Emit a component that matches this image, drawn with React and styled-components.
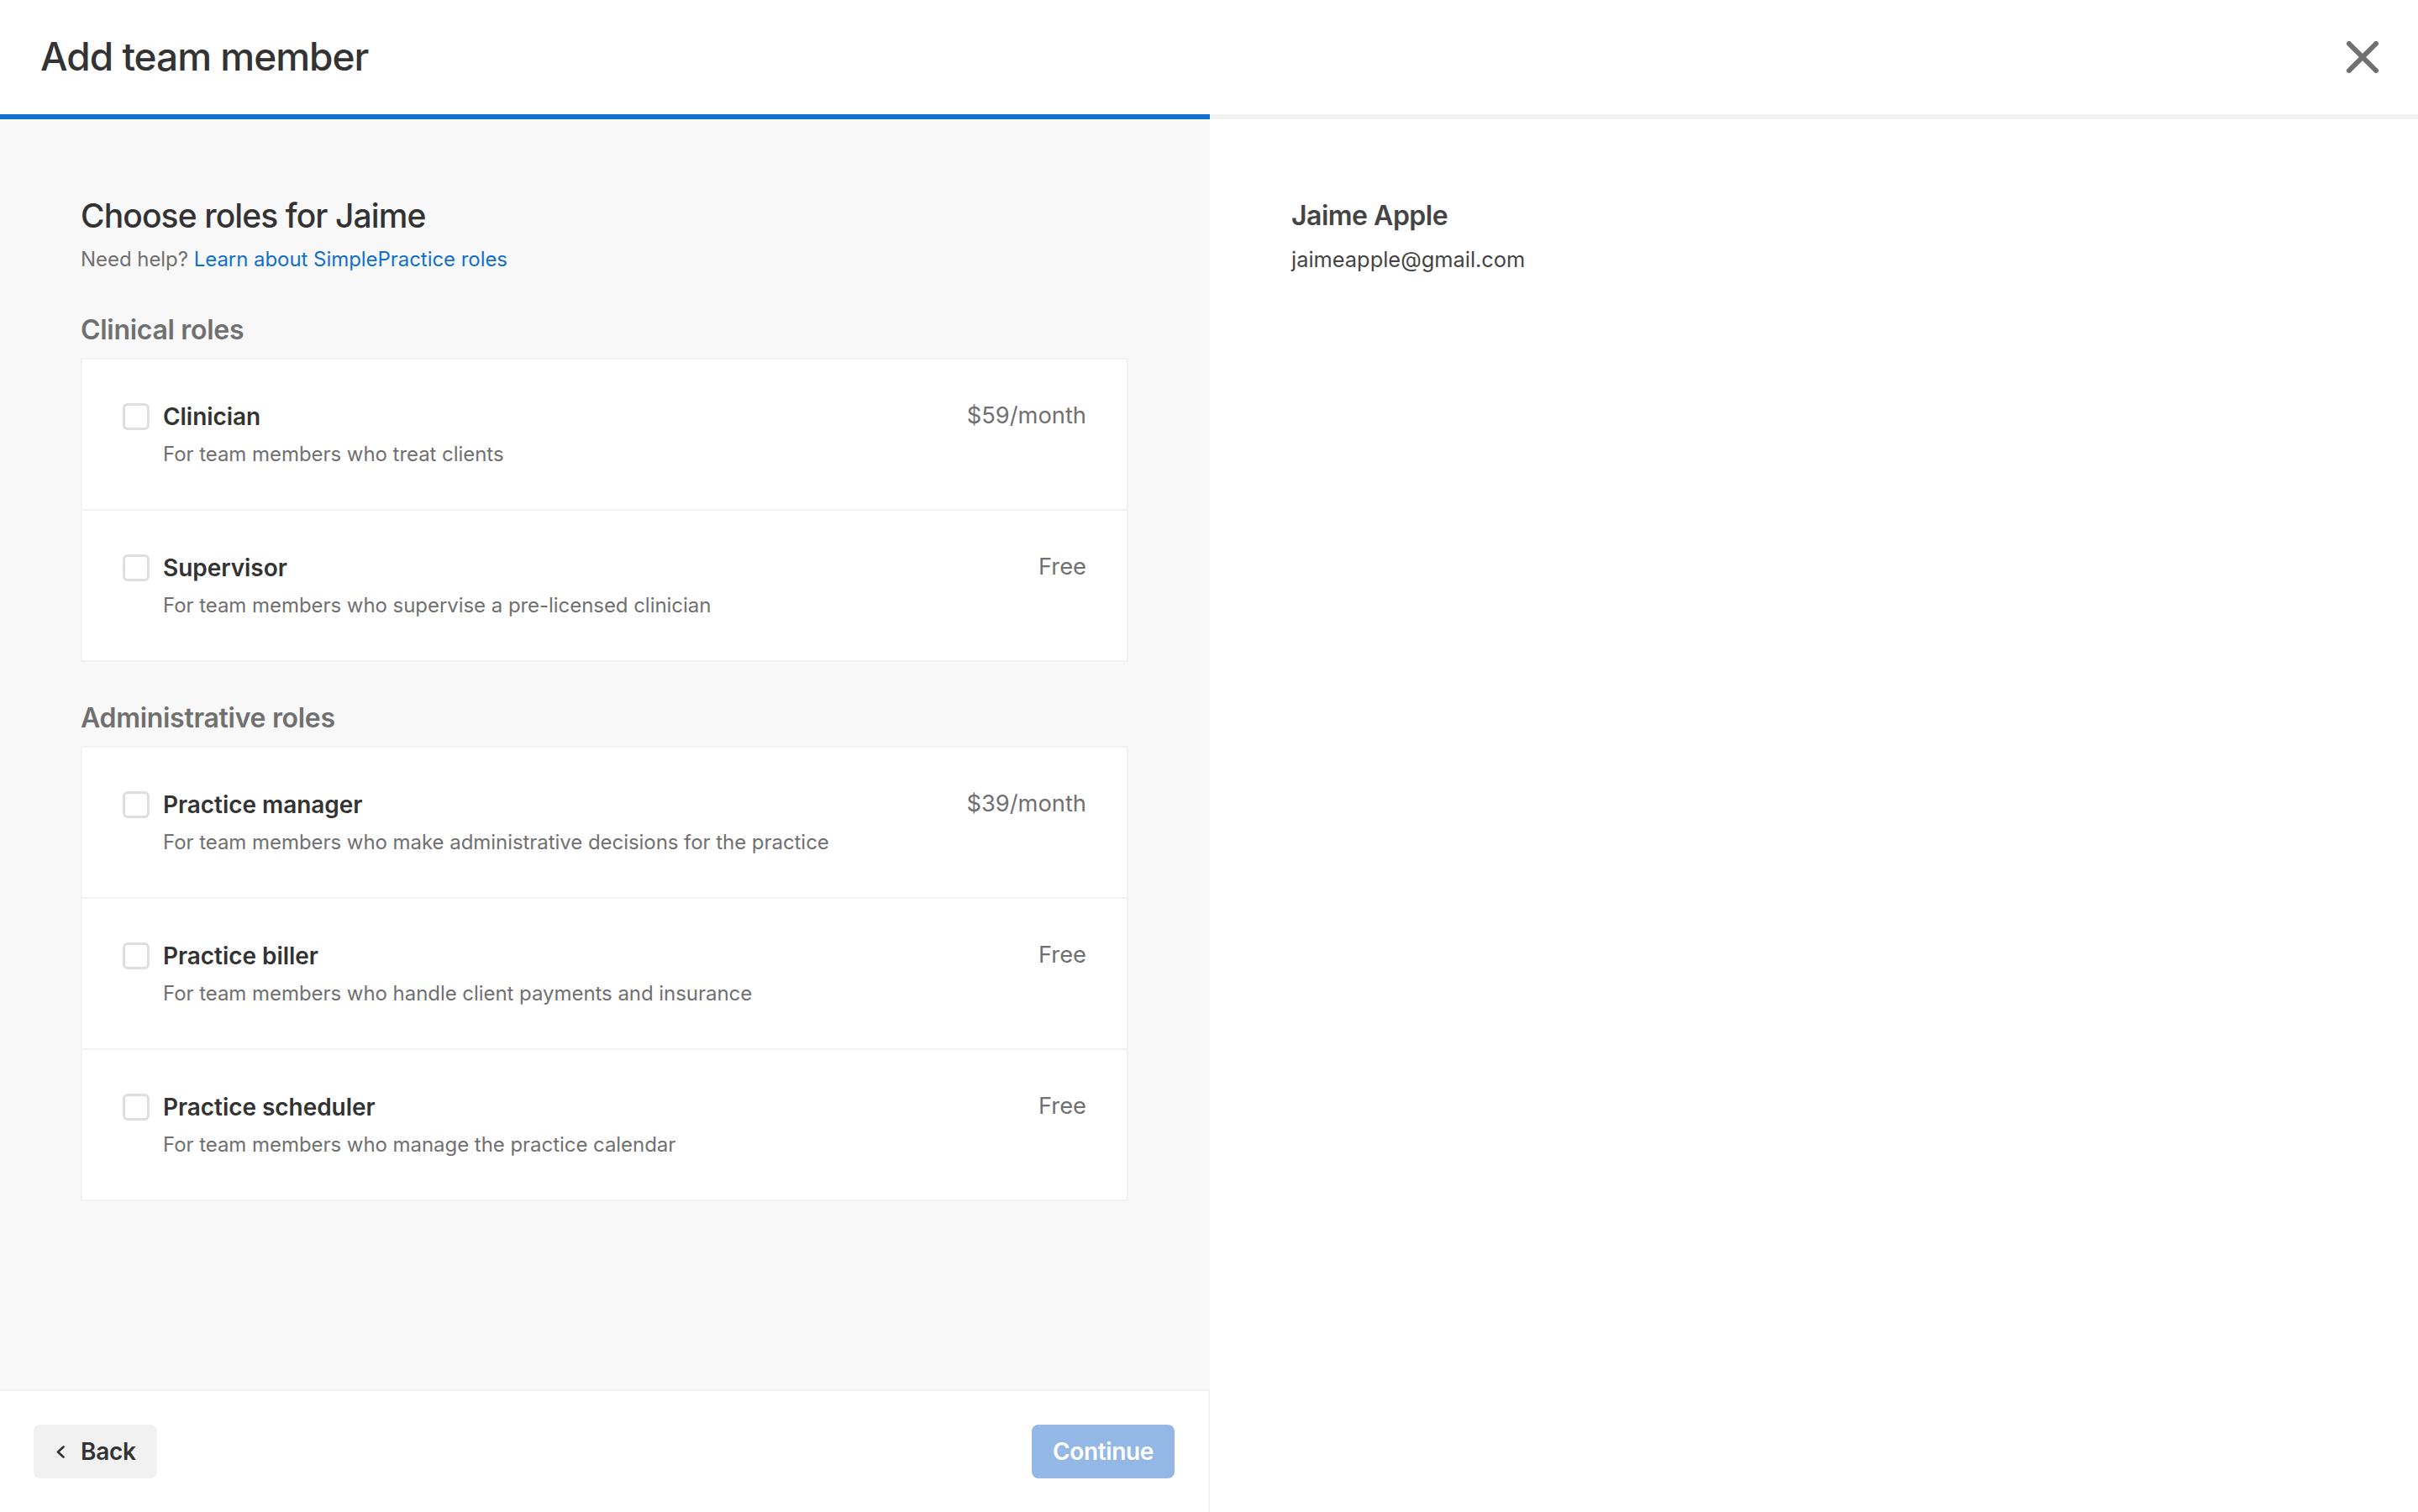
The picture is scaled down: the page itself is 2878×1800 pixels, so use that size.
import React from "react";
import styled, { createGlobalStyle } from "styled-components";

const Global = createGlobalStyle`
  html, body { margin: 0; padding: 0; background: #fff; }
  body { font-family: Inter, "Liberation Sans", sans-serif; color: #333; -webkit-font-smoothing: antialiased; }
  * { box-sizing: border-box; }
`;

const Page = styled.div`
  width: 2878px;
  height: 1800px;
  display: flex;
  flex-direction: column;
  overflow: hidden;
`;
const Header = styled.header`
  height: 136px;
  flex: none;
  display: flex;
  align-items: center;
  justify-content: space-between;
  padding: 0 47px 0 48px;
`;
const Title = styled.h1`
  margin: 0 0 2px;
  font-size: 46px;
  font-weight: 500;
  letter-spacing: -1px;
  color: #333;
`;
const CloseButton = styled.button`
  width: 38px;
  height: 38px;
  padding: 0;
  border: 0;
  background: none;
  display: flex;
  color: #707070;
`;
const Progress = styled.div`
  height: 6px;
  flex: none;
  background: #f1f1f1;
`;
const ProgressFill = styled.div`
  width: 1440px;
  height: 100%;
  background: #1170cd;
`;
const Body = styled.div`
  flex: 1;
  min-height: 0;
  display: grid;
  grid-template-columns: 1440px 1fr;
`;
const Left = styled.div`
  display: flex;
  flex-direction: column;
`;
const Content = styled.main`
  flex: 1;
  background: #f8f8f8;
  padding: 91px 97px 0 96px;
`;
const Heading = styled.h2`
  margin: 0;
  font-size: 39px;
  line-height: 48px;
  font-weight: 500;
  letter-spacing: -0.9px;
  color: #333;
`;
const Help = styled.p`
  margin: 12px 0 0;
  font-size: 24px;
  line-height: 32px;
  letter-spacing: -0.05px;
  color: #707070;
`;
const HelpLink = styled.a`
  color: #1170cd;
  text-decoration: none;
`;
const GroupTitle = styled.h3`
  margin: ${(p) => p.$top}px 0 13px;
  font-size: 32px;
  line-height: 40px;
  font-weight: 600;
  letter-spacing: -0.3px;
  color: #707070;
`;
const Card = styled.div`
  border: 2px solid #f1f1f1;
  background: #fff;
`;
const Row = styled.label`
  display: grid;
  grid-template-columns: 32px 1fr auto;
  align-items: start;
  column-gap: 16px;
  height: 178px;
  padding: 51px 48px 0 48px;
  & + & {
    height: 180px;
    border-top: 2px solid #f1f1f1;
  }
`;
const Box = styled.span`
  width: 32px;
  height: 32px;
  margin-top: 1px;
  border: 3px solid #dedede;
  border-radius: 6px;
  background: #fff;
`;
const RoleText = styled.div`
  display: flex;
  flex-direction: column;
`;
const RoleName = styled.span`
  font-size: 28px;
  line-height: 34px;
  font-weight: 600;
  letter-spacing: -0.05px;
  color: #333;
`;
const RoleDesc = styled.span`
  margin-top: 12px;
  font-size: 24px;
  line-height: 32px;
  letter-spacing: -0.05px;
  color: #707070;
`;
const Price = styled.span`
  font-size: 27.3px;
  line-height: 32px;
  color: #707070;
`;
const Footer = styled.footer`
  height: 146px;
  flex: none;
  display: flex;
  align-items: center;
  justify-content: space-between;
  padding: 0 40px 0 40px;
  border-top: 2px solid #f1f1f1;
  border-right: 2px solid #f1f1f1;
  background: #fff;
`;
const Button = styled.button`
  height: 64px;
  border: 0;
  border-radius: 8px;
  display: flex;
  align-items: center;
  gap: 19px;
  padding: ${(p) => (p.$primary ? "0 25px" : "0 25px 0 27px")};
  font-family: inherit;
  font-size: 28px;
  font-weight: 600;
  letter-spacing: ${(p) => (p.$primary ? "-0.35px" : "-0.25px")};
  background: ${(p) => (p.$primary ? "#94b8e5" : "#f1f1f1")};
  color: ${(p) => (p.$primary ? "#fff" : "#333")};
`;
const Right = styled.aside`
  padding: 91px 0 0 97px;
`;
const Person = styled.div`
  font-size: 32px;
  line-height: 48px;
  font-weight: 600;
  letter-spacing: -0.5px;
  color: #444;
`;
const Email = styled.div`
  margin-top: 12px;
  font-size: 25.4px;
  line-height: 32px;
  color: #444;
`;

const groups = [
  {
    title: "Clinical roles",
    top: 48,
    roles: [
      ["Clinician", "For team members who treat clients", "$59/month"],
      ["Supervisor", "For team members who supervise a pre-licensed clinician", "Free"],
    ],
  },
  {
    title: "Administrative roles",
    top: 47,
    roles: [
      ["Practice manager", "For team members who make administrative decisions for the practice", "$39/month"],
      ["Practice biller", "For team members who handle client payments and insurance", "Free"],
      ["Practice scheduler", "For team members who manage the practice calendar", "Free"],
    ],
  },
];

export default function App() {
  return (
    <Page>
      <Global />
      <Header>
        <Title>Add team member</Title>
        <CloseButton aria-label="Close">
          <svg width="38" height="38" viewBox="0 0 38 38" fill="none" stroke="currentColor" strokeWidth="6" strokeLinecap="round">
            <path d="M3 3 L35 35 M35 3 L3 35" />
          </svg>
        </CloseButton>
      </Header>
      <Progress><ProgressFill /></Progress>
      <Body>
        <Left>
          <Content>
            <Heading>Choose roles for Jaime</Heading>
            <Help>Need help? <HelpLink href="#">Learn about SimplePractice roles</HelpLink></Help>
            {groups.map((g) => (
              <section key={g.title}>
                <GroupTitle $top={g.top}>{g.title}</GroupTitle>
                <Card>
                  {g.roles.map(([name, desc, price]) => (
                    <Row key={name}>
                      <Box />
                      <RoleText>
                        <RoleName>{name}</RoleName>
                        <RoleDesc>{desc}</RoleDesc>
                      </RoleText>
                      <Price>{price}</Price>
                    </Row>
                  ))}
                </Card>
              </section>
            ))}
          </Content>
          <Footer>
            <Button>
              <svg width="10" height="15" viewBox="0 0 10 15" fill="none" stroke="currentColor" strokeWidth="2.6" strokeLinecap="round" strokeLinejoin="round">
                <path d="M8.5 1.5 L2 7.5 L8.5 13.5" />
              </svg>
              Back
            </Button>
            <Button $primary>Continue</Button>
          </Footer>
        </Left>
        <Right>
          <Person>Jaime Apple</Person>
          <Email>jaimeapple@gmail.com</Email>
        </Right>
      </Body>
    </Page>
  );
}
